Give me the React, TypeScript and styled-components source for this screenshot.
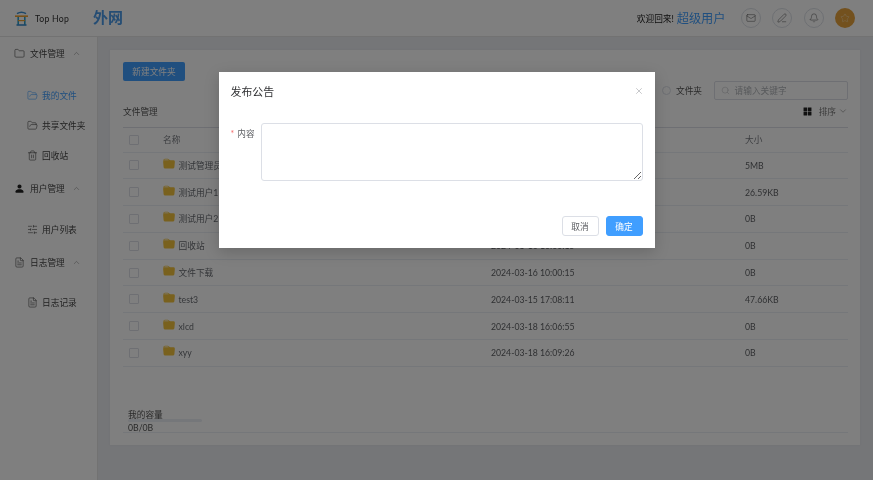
import React from "react";
import styled, { createGlobalStyle } from "styled-components";
import { Folder, FolderOpen, Trash2, SlidersHorizontal, FileText, Mail, PenLine, Bell, Star, Search, ChevronUp, ChevronDown, X } from "lucide-react";
import { BsPersonFill, BsFolderFill } from "react-icons/bs";
import { AiFillAppstore } from "react-icons/ai";

const Global = createGlobalStyle`
  html, body { margin: 0; padding: 0; width: 873px; height: 480px; overflow: hidden; }
  body { font-family: Lato, "Noto Sans CJK SC", sans-serif; font-size: 8.7px; color: #606266; }
  * { box-sizing: border-box; }
`;

const Page = styled.div`
  position: relative;
  width: 873px;
  height: 480px;
  display: flex;
  flex-direction: column;
  background: #eaecf0;
  overflow: hidden;
  filter: blur(0.3px);
`;
const Header = styled.header`
  height: 37px;
  flex: none;
  display: flex;
  align-items: center;
  background: #fff;
  border-bottom: 1px solid #e4e4e4;
  padding: 0 18px 0 15px;
`;
const Brand = styled.span`
  margin-left: 7px;
  width: 57px;
  color: #333;
  font-size: 8.7px;
  letter-spacing: 0.25px;
`;
const Zone = styled.span`
  font-size: 15px;
  font-weight: 700;
  color: #4a9ae8;
  line-height: 1;
  margin-left: 1px;
  margin-top: -1px;
`;
const Spacer = styled.div`
  flex: 1;
`;
const Welcome = styled.span`
  color: #222;
  font-size: 8.7px;
  width: 40px;
  white-space: nowrap;
`;
const UserName = styled.span`
  color: #409eff;
  font-size: 12.2px;
  margin-right: 15px;
`;
const RoundIcon = styled.span`
  width: 20px;
  height: 20px;
  border-radius: 50%;
  border: 1px solid #dcdfe6;
  display: flex;
  align-items: center;
  justify-content: center;
  color: #555;
  margin-right: 11.5px;
`;
const Avatar = styled.span`
  width: 20px;
  height: 20px;
  border-radius: 50%;
  background: #e6a23c;
  display: flex;
  align-items: center;
  justify-content: center;
  color: #f5d9a8;
`;
const Body = styled.div`
  flex: 1;
  display: flex;
  min-height: 0;
`;
const Sidebar = styled.nav`
  width: 98px;
  flex: none;
  background: #fff;
  border-right: 1px solid #e4e4e4;
  display: flex;
  flex-direction: column;
  padding-top: 2.5px;
`;
const GroupRow = styled.div<{ $mt?: number }>`
  height: 27px;
  margin-top: ${(p) => p.$mt ?? 0}px;
  display: flex;
  align-items: center;
  padding-left: 14px;
  gap: 5px;
  color: #444;
`;
const GroupLabel = styled.span`
  width: 37px;
`;
const SubRow = styled.div<{ $active?: boolean; $mt?: number }>`
  height: 27px;
  margin-top: ${(p) => p.$mt ?? 0}px;
  display: flex;
  align-items: center;
  padding-left: 26.5px;
  gap: 4.5px;
  white-space: nowrap;
  color: ${(p) => (p.$active ? "#409eff" : "#444")};
`;
const Main = styled.main`
  flex: 1;
  padding: 13px 13px 35px 12px;
  display: flex;
`;
const Panel = styled.section`
  flex: 1;
  background: #fff;
  box-shadow: 0 0 2px #dcdfe6;
  padding: 12px 12px 0 13px;
  display: flex;
  flex-direction: column;
`;
const NewButton = styled.button`
  width: 62px;
  height: 19px;
  padding: 0;
  border: 0;
  border-radius: 2px;
  background: #409eff;
  color: #fff;
  font: inherit;
`;
const Toolbar = styled.div`
  height: 19px;
  display: flex;
  align-items: center;
  justify-content: flex-end;
  color: #555;
`;
const Radio = styled.span`
  width: 9px;
  height: 9px;
  border-radius: 50%;
  border: 1px solid #dcdfe6;
  margin-right: 5px;
`;
const RadioLabel = styled.span`
  margin-right: 12px;
`;
const SearchBox = styled.div`
  width: 134px;
  height: 19px;
  border: 1px solid #dcdfe6;
  border-radius: 2px;
  display: flex;
  align-items: center;
  gap: 4.5px;
  padding-left: 6px;
  color: #b0b3b8;
`;
const ViewRow = styled.div`
  height: 27px;
  padding-bottom: 5px;
  display: flex;
  align-items: center;
  color: #555;
`;
const SortText = styled.span`
  margin: 0 2px 0 6px;
  color: #777;
`;
const Table = styled.div`
  border-top: 1px solid #dcdfe6;
  display: flex;
  flex-direction: column;
`;
const Row = styled.div<{ $h?: number }>`
  height: ${(p) => p.$h ?? 26.8}px;
  display: grid;
  grid-template-columns: 40px 328px 254px 1fr;
  align-items: center;
  border-bottom: 1px solid #ebeef5;
  color: #606266;
`;
const Check = styled.span`
  width: 10px;
  height: 10px;
  border: 1px solid #dcdfe6;
  border-radius: 1px;
  margin-left: 6px;
`;
const NameCell = styled.span`
  display: flex;
  align-items: center;
  gap: 3.5px;
  color: #6a6d73;
`;
const HeadCell = styled.span`
  color: #7a7d83;
`;
const Usage = styled.div`
  margin-top: 41px;
  border-bottom: 1px solid #ebeef5;
  padding: 2px 0 0 5px;
  height: 25px;
  color: #555;
  line-height: 9.5px;
`;
const UsageBar = styled.div`
  width: 74px;
  height: 3px;
  background: #ebeef5;
  border-radius: 2px;
  margin-bottom: 1px;
`;
const Mask = styled.div`
  position: absolute;
  inset: 0;
  display: flex;
  justify-content: center;
  padding-top: 72px;
  background: rgba(0, 0, 0, 0.5);
`;
const Modal = styled.div`
  width: 436px;
  height: 176px;
  background: #fff;
  box-shadow: 0 4px 14px rgba(0, 0, 0, 0.18);
  display: flex;
  flex-direction: column;
  padding: 0 12px 0 12px;
  color: #555;
`;
const ModalHead = styled.div`
  height: 38px;
  display: flex;
  align-items: center;
  justify-content: space-between;
`;
const ModalTitle = styled.h2`
  margin: 0;
  font-size: 10.9px;
  font-weight: 400;
  color: #303133;
`;
const CloseButton = styled.span`
  display: flex;
  color: #85888d;
  margin-right: -1px;
`;
const FormRow = styled.div`
  margin-top: 13px;
  display: flex;
  gap: 7px;
`;
const FormLabel = styled.label`
  width: 23px;
  padding-top: 4px;
  white-space: nowrap;
  color: #606266;
`;
const Required = styled.span`
  color: #f56c6c;
  margin-right: 3px;
`;
const TextArea = styled.textarea`
  width: 382px;
  height: 58px;
  border: 1px solid #dcdfe6;
  border-radius: 3px;
  background: #fff;
  display: block;
  outline: none;
`;
const ModalFoot = styled.div`
  margin-top: 35px;
  display: flex;
  justify-content: flex-end;
  gap: 7px;
`;
const ModalButton = styled.button<{ $primary?: boolean }>`
  width: 37px;
  height: 20px;
  padding: 0;
  border-radius: 3px;
  font: inherit;
  background: ${(p) => (p.$primary ? "#409eff" : "#fff")};
  color: ${(p) => (p.$primary ? "#fff" : "#606266")};
  border: 1px solid ${(p) => (p.$primary ? "#409eff" : "#dcdfe6")};
`;

const LogoMark = () => (
  <svg width="13" height="15" viewBox="0 0 13 15">
    <path d="M2 2.6 Q6.5 -0.2 11 2.6" fill="none" stroke="#3b8fd0" strokeWidth="1.6" />
    <rect x="0" y="4.4" width="13" height="1.6" fill="#eda02e" />
    <rect x="2.4" y="6" width="1.6" height="8" fill="#2f9fc8" />
    <rect x="9" y="6" width="1.6" height="8" fill="#2f9fc8" />
    <rect x="3" y="9" width="7" height="1.2" fill="#eda02e" />
    <rect x="1.5" y="13.2" width="10" height="1.6" fill="#3b8fd0" />
  </svg>
);

const Gold = styled(BsFolderFill)`
  color: #f2c23c;
  flex: none;
  margin-top: -3px;
`;

const rows = [
  ["测试管理员", "2024-03-18 16:06:55", "5MB"],
  ["测试用户1", "2024-03-16 10:00:15", "26.59KB"],
  ["测试用户2", "2024-03-16 10:00:15", "0B"],
  ["回收站", "2024-03-16 10:00:15", "0B"],
  ["文件下载", "2024-03-16 10:00:15", "0B"],
  ["test3", "2024-03-15 17:08:11", "47.66KB"],
  ["xlcd", "2024-03-18 16:06:55", "0B"],
  ["xyy", "2024-03-18 16:09:26", "0B"],
];

export default function App() {
  return (
    <Page>
      <Global />
      <Header>
        <LogoMark />
        <Brand>Top Hop</Brand>
        <Zone>外网</Zone>
        <Spacer />
        <Welcome>欢迎回来!</Welcome>
        <UserName>超级用户</UserName>
        <RoundIcon><Mail size={10} strokeWidth={1.3} /></RoundIcon>
        <RoundIcon><PenLine size={10} strokeWidth={1.3} /></RoundIcon>
        <RoundIcon><Bell size={10} strokeWidth={1.3} /></RoundIcon>
        <Avatar><Star size={10} strokeWidth={1.3} /></Avatar>
      </Header>
      <Body>
        <Sidebar>
          <GroupRow><Folder size={11} strokeWidth={1.3} /><GroupLabel>文件管理</GroupLabel><ChevronUp size={9} strokeWidth={1.3} color="#777" /></GroupRow>
          <SubRow $active $mt={15}><FolderOpen size={11} strokeWidth={1.3} />我的文件</SubRow>
          <SubRow $mt={3}><FolderOpen size={11} strokeWidth={1.3} />共享文件夹</SubRow>
          <SubRow $mt={3}><Trash2 size={11} strokeWidth={1.3} />回收站</SubRow>
          <GroupRow $mt={6}><BsPersonFill size={11} color="#222" /><GroupLabel>用户管理</GroupLabel><ChevronUp size={9} strokeWidth={1.3} color="#777" /></GroupRow>
          <SubRow $mt={14}><SlidersHorizontal size={11} strokeWidth={1.3} />用户列表</SubRow>
          <GroupRow $mt={6}><FileText size={11} strokeWidth={1.3} /><GroupLabel>日志管理</GroupLabel><ChevronUp size={9} strokeWidth={1.3} color="#777" /></GroupRow>
          <SubRow $mt={13}><FileText size={11} strokeWidth={1.3} />日志记录</SubRow>
        </Sidebar>
        <Main>
          <Panel>
            <NewButton>新建文件夹</NewButton>
            <Toolbar>
              <Radio />
              <RadioLabel>文件夹</RadioLabel>
              <SearchBox><Search size={9} strokeWidth={1.2} />请输入关键字</SearchBox>
            </Toolbar>
            <ViewRow>
              文件管理
              <Spacer />
              <AiFillAppstore size={11} color="#222" />
              <SortText>排序</SortText>
              <ChevronDown size={10} strokeWidth={1.2} color="#666" />
            </ViewRow>
            <Table>
              <Row $h={24.5}><Check /><HeadCell>名称</HeadCell><HeadCell>修改时间</HeadCell><HeadCell>大小</HeadCell></Row>
              {rows.map((r) => (
                <Row key={r[0]}>
                  <Check />
                  <NameCell><Gold size={12} />{r[0]}</NameCell>
                  <span>{r[1]}</span>
                  <span>{r[2]}</span>
                </Row>
              ))}
            </Table>
            <Usage>
              我的容量
              <UsageBar />
              0B/0B
            </Usage>
          </Panel>
        </Main>
      </Body>
      <Mask>
        <Modal>
          <ModalHead>
            <ModalTitle>发布公告</ModalTitle>
            <CloseButton><X size={10} strokeWidth={1.1} /></CloseButton>
          </ModalHead>
          <FormRow>
            <FormLabel><Required>*</Required>内容</FormLabel>
            <TextArea />
          </FormRow>
          <ModalFoot>
            <ModalButton>取消</ModalButton>
            <ModalButton $primary>确定</ModalButton>
          </ModalFoot>
        </Modal>
      </Mask>
    </Page>
  );
}
